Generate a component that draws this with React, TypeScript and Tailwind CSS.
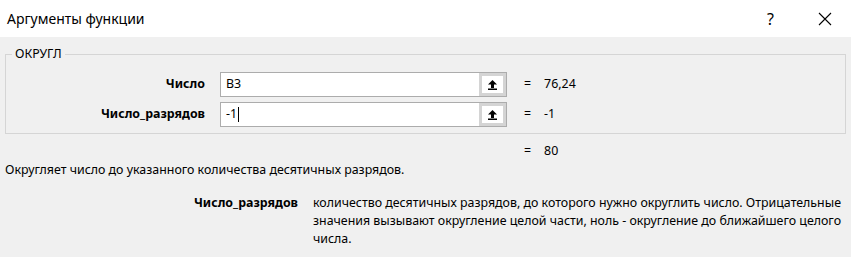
import React from "react";

const font = { fontFamily: '"Noto Sans", "Open Sans", sans-serif' };

const PickButton: React.FC = () => (
  <div className="w-[27px] h-full bg-[#d4d4d4] p-[3px] flex">
    <div className="flex-1 bg-white flex items-center justify-center">
      <svg width="9" height="10" viewBox="0 0 9 10">
        <polygon points="4.5,0 0,4.5 9,4.5" fill="#000" />
        <rect x="3" y="4" width="3" height="4" fill="#000" />
        <rect x="0" y="8.5" width="9" height="1.5" fill="#000" />
      </svg>
    </div>
  </div>
);

const ArgRow: React.FC<{ label: string; value: string; result: string; caret?: boolean }> = ({
  label,
  value,
  result,
  caret,
}) => (
  <div className="flex items-center h-[25px]">
    <div className="w-[199px] text-right font-bold text-[12.4px]">{label}</div>
    <div className="ml-[15px] w-[287px] h-[25px] border border-[#acacac] bg-white flex">
      <div className="flex-1 flex items-center pl-[5px] text-[12.4px]">
        {value}
        {caret && <span className="inline-block w-px h-[15px] bg-black ml-px" />}
      </div>
      <PickButton />
    </div>
    <div className="ml-[17px] text-[12.4px]">=</div>
    <div className="ml-[13px] text-[12.4px]">{result}</div>
  </div>
);

const App: React.FC = () => {
  return (
    <div className="w-[851px] h-[257px] bg-[#f0f0f0] text-black overflow-hidden" style={font}>
      {/* title bar */}
      <div className="h-[37px] bg-white flex items-center">
        <div className="pl-[7px] text-[14px] flex-1">Аргументы функции</div>
        <div className="text-[16px] mr-[44px]">?</div>
        <svg width="14" height="14" viewBox="0 0 14 14" className="mr-[19px]">
          <path d="M1 1 L13 13 M13 1 L1 13" stroke="#000" strokeWidth="1.1" />
        </svg>
      </div>

      <fieldset className="mx-[5px] mt-[10px] border border-[#d5d5d5] pb-[6px]">
        <legend className="ml-[6px] px-[3px] text-[12.4px] leading-[14px]">ОКРУГЛ</legend>
        <div className="mt-[11px] flex flex-col gap-[5px]">
          <ArgRow label="Число" value="B3" result="76,24" />
          <ArgRow label="Число_разрядов" value="-1" result="-1" caret />
        </div>
      </fieldset>

      <div className="flex text-[12.4px] mt-[9px] h-[16px] items-center">
        <div className="ml-[524px]">=</div>
        <div className="ml-[13px]">80</div>
      </div>

      <div className="text-[12.4px] ml-[5px] mt-[3px] leading-[16px]">
        Округляет число до указанного количества десятичных разрядов.
      </div>

      <div className="flex mt-[16px] text-[12.4px] leading-[18px]">
        <div className="w-[298px] text-right font-bold">Число_разрядов</div>
        <div className="ml-[15px] w-[535px]">
          количество десятичных разрядов, до которого нужно округлить число. Отрицательные значения
          вызывают округление целой части, ноль - округление до ближайшего целого числа.
        </div>
      </div>
    </div>
  );
};

export default App;
